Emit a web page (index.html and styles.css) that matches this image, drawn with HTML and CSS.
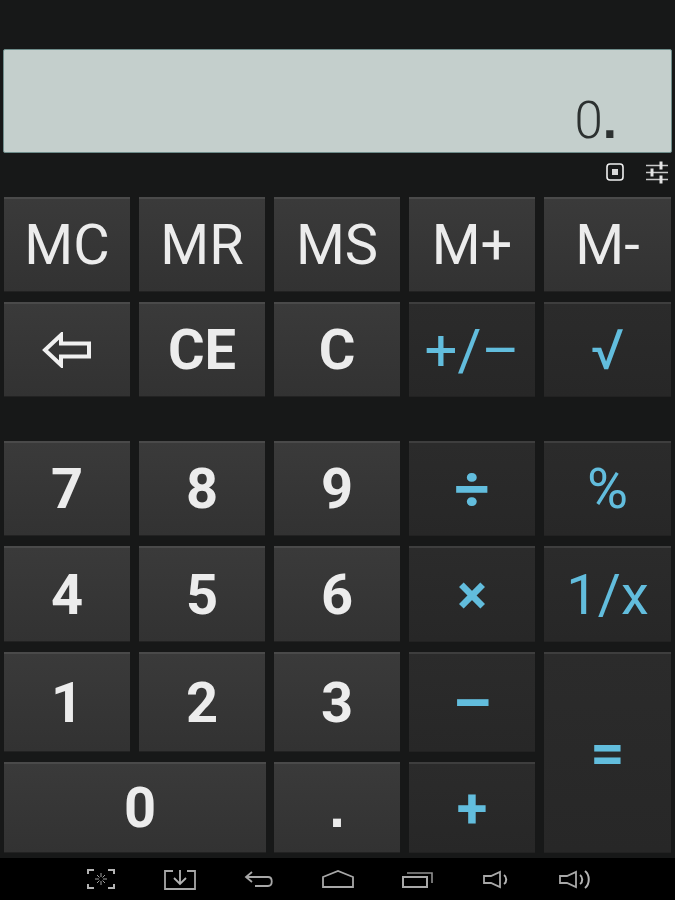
FILE: index.html
```html
<!DOCTYPE html>
<html lang="en">
<head>
    <meta charset="UTF-8">
    <title>calculator</title>
    <link rel="stylesheet" href="styles.css">
</head>
<body>
<div class="cal">
    <div class="screen"><span class="value">0<span class="point">.</span></span></div>
    <div class="tools">
        <svg class="tool-mem" width="18" height="18" viewBox="0 0 18 18">
            <rect x="1" y="1" width="16" height="16" rx="3" fill="none" stroke="#f0f0f0" stroke-width="1.6"/>
            <rect x="6" y="6" width="6" height="6" fill="#d8d8d8"/>
        </svg>
        <svg class="tool-set" width="24" height="24" viewBox="0 0 24 24">
            <path d="M1 5.500h22M1 12.500h22M1 19.500h22" stroke="#c8c8c8" stroke-width="1.400"/>
            <path d="M16 1.500v8M7 8.500v8M16 15.500v8" stroke="#e4e4e4" stroke-width="3"/>
        </svg>
    </div>
    <div class="keys mem">
        <div class="key">MC</div>
        <div class="key">MR</div>
        <div class="key">MS</div>
        <div class="key">M+</div>
        <div class="key">M-</div>
        <div class="key">
            <svg width="50" height="36" viewBox="0 0 50 36">
                <path d="M3 18L19 3v8.500h28v13H19V33z" fill="none" stroke="#f0f0f0" stroke-width="4"/>
            </svg>
        </div>
        <div class="key b">CE</div>
        <div class="key b">C</div>
        <div class="key op sign">+/–</div>
        <div class="key op">√</div>
    </div>
    <div class="keys num">
        <div class="key b">7</div>
        <div class="key b">8</div>
        <div class="key b">9</div>
        <div class="key op b divide">÷</div>
        <div class="key op">%</div>
        <div class="key b">4</div>
        <div class="key b">5</div>
        <div class="key b">6</div>
        <div class="key op b">×</div>
        <div class="key op">1/x</div>
        <div class="key b">1</div>
        <div class="key b">2</div>
        <div class="key b">3</div>
        <div class="key op b minus">–</div>
        <div class="key op b equal">=</div>
        <div class="key b zero">0</div>
        <div class="key b dot">.</div>
        <div class="key op b">+</div>
    </div>
</div>
<div class="nav">
    <div class="nav-item">
        <svg width="32" height="24" viewBox="0 0 32 24">
            <path d="M3 7V3h6M23 3h6v4M3 17v4h6M23 21h6v-4" fill="none" stroke="#b4b4b4" stroke-width="2"/>
            <path d="M16 6v4M16 14v4M10 12h4M18 12h4M12 8l2.500 2.500M20 8l-2.500 2.500M12 16l2.500-2.500M20 16l-2.500-2.500" stroke="#a0a0a0" stroke-width="1"/>
        </svg>
    </div>
    <div class="nav-item">
        <svg width="32" height="24" viewBox="0 0 32 24">
            <path d="M9 4H1v18h30V4h-8" fill="none" stroke="#a8a8a8" stroke-width="1.800"/>
            <path d="M16 3v13M10 11l6 6 6-6" fill="none" stroke="#b4b4b4" stroke-width="1.800"/>
        </svg>
    </div>
    <div class="nav-item">
        <svg width="32" height="24" viewBox="0 0 32 24">
            <path d="M9 5L3 10l6 5M3 10h22c5 0 5 9 0 9H12" fill="none" stroke="#a8a8a8" stroke-width="1.800"/>
        </svg>
    </div>
    <div class="nav-item">
        <svg width="32" height="24" viewBox="0 0 32 24">
            <path d="M1 10L16 4l15 6v10H1z" fill="none" stroke="#a8a8a8" stroke-width="1.800"/>
        </svg>
    </div>
    <div class="nav-item">
        <svg width="32" height="24" viewBox="0 0 32 24">
            <path d="M2 10h24v10H2z" fill="none" stroke="#a8a8a8" stroke-width="2"/>
            <path d="M6 6h25v10" fill="none" stroke="#909090" stroke-width="1.600"/>
        </svg>
    </div>
    <div class="nav-item">
        <svg width="32" height="24" viewBox="0 0 32 24">
            <path d="M4 9h7l9-4v15l-9-4H4z" fill="none" stroke="#a8a8a8" stroke-width="1.800"/>
            <path d="M24 8c3 2 3 7 0 9" fill="none" stroke="#b4b4b4" stroke-width="2"/>
        </svg>
    </div>
    <div class="nav-item">
        <svg width="32" height="24" viewBox="0 0 32 24">
            <path d="M1 9h7l9-4v15l-9-4H1z" fill="none" stroke="#a8a8a8" stroke-width="1.800"/>
            <path d="M21 8c3 2 3 7 0 9M26 4c5 4 5 13 0 17" fill="none" stroke="#b4b4b4" stroke-width="2"/>
        </svg>
    </div>
</div>
</body>
</html>
```

FILE: styles.css
```css
* {
    box-sizing: border-box;
}

html, body {
    margin: 0;
    height: 900px;
    overflow: hidden;
}

body {
    background: #000;
    font-family: Roboto, "Liberation Sans", sans-serif;
}

.cal {
    height: 858px;
    padding-top: 49px;
    background: #171818;
}

.screen {
    display: flex;
    align-items: flex-end;
    justify-content: flex-end;
    height: 104px;
    margin: 0 3px;
    padding: 0 54px 1px 0;
    background: #c4cfcc;
    border: 1px solid #6e8c8a;
    border-radius: 2px;
    color: #2c3130;
}

.value {
    font-size: 51px;
    font-weight: 300;
    line-height: 60px;
}

.point {
    font-family: "Liberation Sans", sans-serif;
    font-weight: 700;
}

.tools {
    display: flex;
    justify-content: flex-end;
    align-items: center;
    gap: 21px;
    height: 24px;
    margin-top: 7px;
    margin-bottom: 13px;
    padding-right: 6px;
}

.keys {
    display: grid;
    grid-template-columns: 126px 126px 126px 126px 127px;
    column-gap: 9px;
    padding-left: 4px;
}

.mem {
    grid-template-rows: 94px 94px;
    row-gap: 11px;
    margin-bottom: 45px;
}

.num {
    grid-template-rows: 94px 95px 99px 90px;
    row-gap: 11px;
}

.key {
    display: flex;
    align-items: center;
    justify-content: center;
    background: linear-gradient(#3a3a3a, #323232);
    border-top: 2px solid #4a4a4a;
    box-shadow: 0 1px 0 #222;
    color: #ececec;
    font-size: 56px;
    line-height: 1;
}

.b {
    font-weight: 700;
}

.op {
    background: linear-gradient(#2b2b2b, #272727);
    border-top-color: #3e3e3e;
    color: #62bddd;
}

.sign {
    font-size: 58px;
}

.divide {
    font-size: 62px;
}

.minus {
    font-size: 62px;
}

.equal {
    grid-row: span 2;
    font-size: 60px;
}

.zero {
    grid-column: span 2;
    margin-right: -1px;
    padding-left: 10px;
}

.dot {
    font-family: "Liberation Sans", sans-serif;
}

.nav {
    display: flex;
    justify-content: center;
    height: 42px;
    padding-top: 9px;
}

.nav-item {
    display: flex;
    justify-content: center;
    width: 79px;
}
```
